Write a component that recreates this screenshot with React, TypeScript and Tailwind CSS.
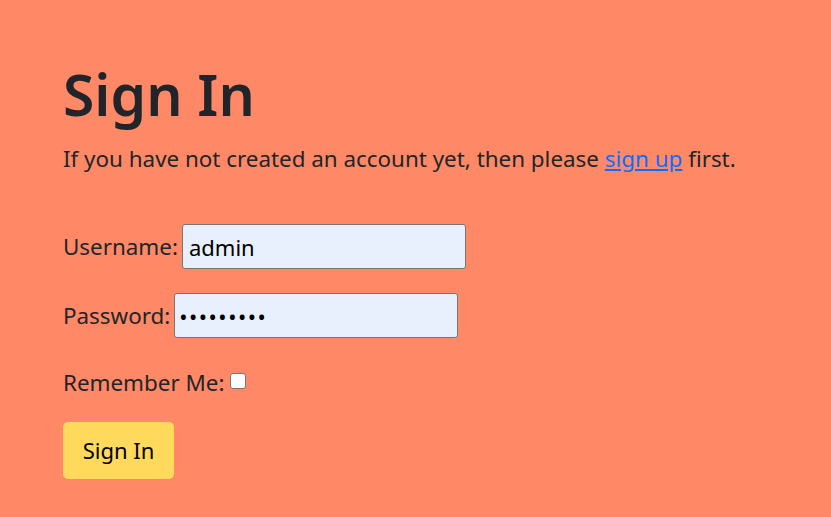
export default function App() {
  return (
    <main
      className="min-h-screen bg-[#ff8966] px-[63px] pt-[58px] text-[#212529]"
      style={{ fontFamily: '"Noto Sans", "Open Sans", sans-serif' }}
    >
      <h1 className="text-[57px] leading-[72px] font-semibold">Sign In</h1>
      <p className="mt-[12px] text-[22.4px] leading-[33px]">
        If you have not created an account yet, then please{" "}
        <a href="#" className="text-[#0d6efd] underline">
          sign up
        </a>{" "}
        first.
      </p>

      <form className="mt-[49px] flex flex-col items-start text-[22.4px]">
        <label className="flex items-center gap-[4px]">
          Username:
          <input
            defaultValue="admin"
            className="h-[45px] w-[284px] rounded-[3px] border border-[#767676] bg-[#e8f0fe] px-[6px] text-[22px] text-black outline-none"
          />
        </label>

        <label className="mt-[24px] flex items-center gap-[4px]">
          Password:
          <input
            type="password"
            defaultValue="password1"
            className="h-[45px] w-[284px] rounded-[3px] border border-[#767676] bg-[#e8f0fe] px-[4px] text-[22px] tracking-[1.5px] text-black outline-none"
          />
        </label>

        <label className="mt-[28px] flex items-center gap-[6px]">
          Remember Me:
          <input
            type="checkbox"
            className="mb-[4px] h-[16px] w-[16px] appearance-none rounded-[3px] border border-[#767676] bg-white"
          />
        </label>

        <button
          type="button"
          className="mt-[22px] h-[57px] w-[111px] rounded-[5px] bg-[#ffd95c] text-[22px] text-black"
        >
          Sign In
        </button>
      </form>
    </main>
  );
}
